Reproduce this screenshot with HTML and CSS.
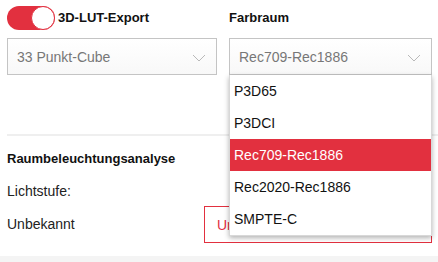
FILE: index.html
```html
<!DOCTYPE html>
<html lang="de">
<head>
  <meta charset="UTF-8">
  <title>3D-LUT-Export</title>
  <link rel="stylesheet" href="styles.css">
</head>
<body>
<div class="panel">
  <div class="cols">
    <div class="col">
      <div class="label-row">
        <span class="switch on"><span class="knob"></span></span>
        <span class="label">3D-LUT-Export</span>
      </div>
      <div class="select">
        <span class="value">33 Punkt-Cube</span>
        <svg class="chev" width="14" height="8" viewBox="0 0 14 8"><path d="M1 1l6 6 6-6" fill="none" stroke="#b9b9b9" stroke-width="1"/></svg>
      </div>
    </div>
    <div class="col col-right">
      <div class="label-row">
        <span class="label">Farbraum</span>
      </div>
      <div class="select">
        <span class="value">Rec709-Rec1886</span>
        <svg class="chev" width="14" height="8" viewBox="0 0 14 8"><path d="M1 1l6 6 6-6" fill="none" stroke="#b9b9b9" stroke-width="1"/></svg>
      </div>
      <ul class="menu">
        <li>P3D65</li>
        <li>P3DCI</li>
        <li class="active">Rec709-Rec1886</li>
        <li>Rec2020-Rec1886</li>
        <li>SMPTE-C</li>
      </ul>
    </div>
  </div>

  <div class="divider"></div>

  <h3 class="title">Raumbeleuchtungsanalyse</h3>
  <div class="row">Lichtstufe:</div>
  <div class="row row-btn">
    <span>Unbekannt</span>
    <button class="btn">Umgebungslicht messen</button>
  </div>
</div>
<div class="footer"></div>
</body>
</html>
```

FILE: styles.css
```css
body,div,ul,li,h3{margin:0;padding:0;}
ul{list-style-type:none;}
body{background:#fff;font:14px/20px "Liberation Sans",Arial,sans-serif;color:#222;}

.panel{padding:5px 6px 0 7px;}
.cols{display:grid;grid-template-columns:210px 1fr;column-gap:12px;}
.col-right{position:relative;}

.label-row{display:flex;align-items:center;gap:3px;height:25px;margin-bottom:8px;}
.label{font-weight:700;font-size:13px;color:#111;}

.switch{display:inline-block;position:relative;width:48px;height:24px;border-radius:12px;background:#e2303f;}
.switch .knob{position:absolute;right:0;top:0;width:22px;height:22px;border-radius:50%;background:#fff;border:1px solid #e2303f;}

.select{display:flex;align-items:center;justify-content:space-between;height:35px;padding:0 10px 0 9px;border:1px solid #c4c4c4;background:linear-gradient(#fff,#f8f8f8);}
.select .value{color:#777;}
.chev{margin-top:2px;}

.menu{position:absolute;left:0;right:0;top:70px;background:#fff;border:1px solid #d8d8d8;border-top:0;box-shadow:0 2px 5px rgba(0,0,0,.3);z-index:2;}
.menu li{height:32px;line-height:32px;padding-left:4px;color:#111;}
.menu li.active{background:#e2303f;color:#fff;}

.divider{height:2px;background:#efefef;margin:59px -6px 0 0;}

.title{font-size:13px;font-weight:700;line-height:16px;margin-top:15px;color:#111;}
.row{margin-top:16px;line-height:16px;}
.row-btn{display:flex;justify-content:space-between;align-items:center;margin-top:6px;}
.btn{width:228px;height:37px;margin-top:1px;padding:0 12px;text-align:left;background:#fff;border:1px solid #e2303f;color:#e2303f;font:14px "Liberation Sans",Arial,sans-serif;}

.footer{height:10px;margin-top:13px;background:#f4f4f4;}
```
